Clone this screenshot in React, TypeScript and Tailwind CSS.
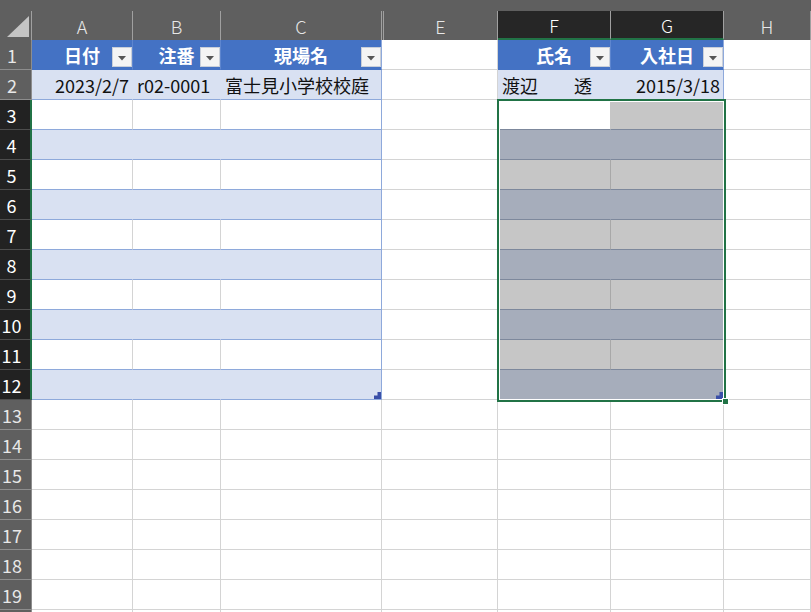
import React from "react";

type Col = { key: string; w: string };

const COLS: Col[] = [
  { key: "A", w: "w-[101px]" },
  { key: "B", w: "w-[88px]" },
  { key: "C", w: "w-[161px]" },
  { key: "D", w: "w-[2px]" },
  { key: "E", w: "w-[114px]" },
  { key: "F", w: "w-[113px]" },
  { key: "G", w: "w-[113px]" },
  { key: "H", w: "w-[87px]" },
];

const ROWS = Array.from({ length: 20 }, (_, i) => i + 1);

const HEADERS: Record<string, string> = {
  A: "日付",
  B: "注番",
  C: "現場名",
  F: "氏名",
  G: "入社日",
};

// row 2 values, with alignment
const DATA: Record<string, { text: string; right?: boolean }> = {
  A: { text: "2023/2/7", right: true },
  B: { text: "r02-0001" },
  C: { text: "富士見小学校校庭" },
  F: { text: "渡辺　　透" },
  G: { text: "2015/3/18", right: true },
};

const isSelRow = (r: number) => r >= 3 && r <= 12;

function cellColors(r: number, c: string): string {
  if (c === "D") return "bg-white border-b-[#d4d4d4]";

  const inTable = ["A", "B", "C", "F", "G"].includes(c) && r <= 12;
  const edge = c === "C" || c === "G";

  if (!inTable) return "bg-white border-r-[#d4d4d4] border-b-[#d4d4d4]";

  if (r === 1) {
    return edge
      ? "bg-[#4472c4] border-r-[#8ea9db] border-b-[#4472c4]"
      : "bg-[#4472c4] border-r-[#5e86cf] border-b-[#4472c4]";
  }
  if (r === 2) {
    return edge
      ? "bg-[#d9e1f2] border-r-[#8ea9db] border-b-[#8ea9db]"
      : "bg-[#d9e1f2] border-r-[#d9e1f2] border-b-[#8ea9db]";
  }

  // selected block F3:G12
  if (c === "F" || c === "G") {
    if (r === 3 && c === "F") return "bg-white border-r-[#c6c6c6] border-b-[#7d889c]";
    if (r % 2 === 1) {
      return c === "F"
        ? "bg-[#c6c6c6] border-r-[#a8a8a8] border-b-[#7d889c]"
        : "bg-[#c6c6c6] border-r-[#8ea9db] border-b-[#7d889c]";
    }
    return c === "F"
      ? "bg-[#a6adbb] border-r-[#a6adbb] border-b-[#7d889c]"
      : "bg-[#a6adbb] border-r-[#8ea9db] border-b-[#7d889c]";
  }

  if (r % 2 === 1) {
    return edge
      ? "bg-white border-r-[#8ea9db] border-b-[#8ea9db]"
      : "bg-white border-r-[#d4d4d4] border-b-[#8ea9db]";
  }
  return edge
    ? "bg-[#d9e1f2] border-r-[#8ea9db] border-b-[#8ea9db]"
    : "bg-[#d9e1f2] border-r-[#d9e1f2] border-b-[#8ea9db]";
}

function Dropdown() {
  return (
    <div className="absolute right-0 top-[7px] w-[20px] h-[20px] bg-[#f4f4f4] border border-[#c9cfd9] flex items-center justify-center">
      <svg width="8" height="5" viewBox="0 0 8 5" className="mt-[2px]">
        <polygon points="0,0 8,0 4,4.5" fill="#555555" />
      </svg>
    </div>
  );
}

// little table-resize corner at the last cell of a table
function ResizeHandle() {
  return (
    <svg width="7" height="7" viewBox="0 0 7 7" className="absolute right-0 bottom-0">
      <polygon points="3.5,0 7,0 7,7 0,7 0,3.5 3.5,3.5" fill="#3a4fa8" />
    </svg>
  );
}

function Cell({ r, col }: { r: number; col: Col }) {
  const c = col.key;
  const colors = cellColors(r, c);
  const borders = c === "D" ? "border-b" : "border-r border-b";

  let content: React.ReactNode = null;
  if (r === 1 && HEADERS[c]) {
    content = (
      <>
        <div className="w-full text-center font-bold text-white">{HEADERS[c]}</div>
        <Dropdown />
      </>
    );
  } else if (r === 2 && DATA[c]) {
    const d = DATA[c];
    content = (
      <div className={d.right ? "w-full text-right pr-[3px] whitespace-pre" : "w-full text-left pl-[4px] whitespace-pre"}>
        {d.text}
      </div>
    );
  } else if (r === 12 && (c === "C" || c === "G")) {
    content = <ResizeHandle />;
  }

  return (
    <div className={`relative h-full shrink-0 flex items-center ${col.w} ${borders} ${colors}`}>
      {content}
    </div>
  );
}

function RowHeader({ r }: { r: number }) {
  const sel = isSelRow(r);
  return (
    <div
      className={
        sel
          ? "w-[32px] h-full shrink-0 flex items-center justify-center pr-[7px] bg-[#222222] text-white border-b border-b-[#4d4d4d] border-r-2 border-r-[#217346]"
          : "w-[32px] h-full shrink-0 flex items-center justify-center pr-[7px] bg-[#5f5f5f] text-[#e8e8e8] border-b border-b-[#8d8d8d] border-r border-r-[#8d8d8d]"
      }
    >
      {r}
    </div>
  );
}

function ColumnHeader({ col }: { col: Col }) {
  if (col.key === "D") {
    return <div className="w-[2px] h-full shrink-0 bg-[#5f5f5f] border-r border-r-[#a0a0a0]" />;
  }
  const sel = col.key === "F" || col.key === "G";
  return (
    <div
      className={
        sel
          ? `${col.w} h-full shrink-0 flex items-center justify-center bg-[#262626] text-white border-r border-r-[#a0a0a0] border-b-2 border-b-[#217346]`
          : `${col.w} h-full shrink-0 flex items-center justify-center bg-[#5f5f5f] text-[#e8e8e8] border-r border-r-[#a0a0a0]`
      }
    >
      <span className="font-light">{col.key}</span>
    </div>
  );
}

export default function App() {
  return (
    <div className="relative w-[811px] h-[612px] overflow-hidden bg-white font-['Noto_Sans_CJK_JP',sans-serif] text-[18px] leading-none text-[#111111]">
      <div className="h-[11px] bg-[#5f5f5f]" />
      <div className="flex h-[29px]">
        <div className="w-[32px] h-full shrink-0 flex items-end justify-end pr-[2px] pb-[3px] bg-[#5f5f5f] border-r border-r-[#a0a0a0]">
          <svg width="22" height="21" viewBox="0 0 22 21">
            <polygon points="22,0 22,21 0,21" fill="#c4c4c4" />
          </svg>
        </div>
        {COLS.map((col) => (
          <ColumnHeader key={col.key} col={col} />
        ))}
      </div>

      {ROWS.map((r) => (
        <div key={r} className="flex h-[30px]">
          <RowHeader r={r} />
          {COLS.map((col) => (
            <Cell key={col.key} r={r} col={col} />
          ))}
        </div>
      ))}

      {/* selection F3:G12, drawn over the cells */}
      <div className="absolute left-[497px] top-[99px] w-[229px] h-[303px] border-2 border-[#217346]">
        <div className="w-full h-full border border-white" />
        <div className="absolute -right-[5px] -bottom-[5px] w-[7px] h-[7px] bg-[#217346] border border-white" />
      </div>
    </div>
  );
}
